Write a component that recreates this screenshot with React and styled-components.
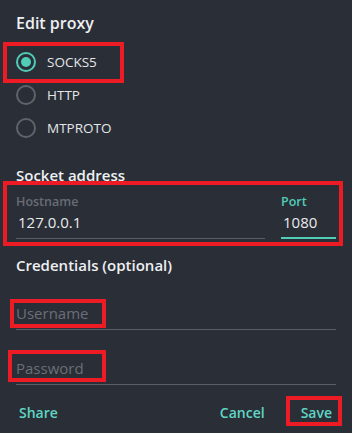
import styled, { createGlobalStyle } from "styled-components";

const GlobalStyle = createGlobalStyle`
  html, body {
    margin: 0;
    padding: 0;
    background: #2a2e37;
  }
  *, *::before, *::after {
    box-sizing: border-box;
  }
`;

const accent = "#4fcdb6";

const Dialog = styled.div`
  width: 352px;
  height: 433px;
  padding: 13px 16px 0;
  background: #2a2e37;
  font-family: "Open Sans", "Noto Sans", sans-serif;
  font-size: 15px;
  line-height: 20px;
  color: #e9eaec;
  display: flex;
  flex-direction: column;
`;

const Title = styled.h2`
  margin: 0;
  font-size: 16px;
  line-height: 20px;
  font-weight: 600;
  color: #eef0f2;
`;

const SectionTitle = styled.h3`
  margin: ${({ $top }) => $top}px 0 0;
  font-size: 15px;
  line-height: 20px;
  font-weight: 600;
  color: #eef0f2;
`;

// red annotation frame drawn over a part of the form
const Marked = styled.div`
  position: relative;
  display: flex;
  flex-direction: column;

  &::after {
    content: "";
    position: absolute;
    top: ${({ $box }) => $box[0]}px;
    left: ${({ $box }) => $box[1]}px;
    width: ${({ $box }) => $box[2]}px;
    height: ${({ $box }) => $box[3]}px;
    border: 4px solid #ed1c24;
    pointer-events: none;
  }
`;

const RadioList = styled.div`
  margin-top: 12px;
  display: flex;
  flex-direction: column;
`;

const RadioRow = styled.label`
  height: 33px;
  display: flex;
  align-items: center;
  gap: 11px;
  font-size: 13.5px;
  color: #e4e6e9;
  cursor: pointer;
`;

const RadioDot = styled.span`
  width: 20px;
  height: 20px;
  border-radius: 50%;
  border: 2px solid ${({ $on }) => ($on ? accent : "#5f636b")};
  display: flex;
  align-items: center;
  justify-content: center;

  &::before {
    content: "";
    width: 10px;
    height: 10px;
    border-radius: 50%;
    background: ${({ $on }) => ($on ? accent : "transparent")};
  }
`;

const FieldRow = styled.div`
  margin-top: 9px;
  display: flex;
  gap: 16px;
`;

const Field = styled.div`
  flex: ${({ $width }) => ($width ? `0 0 ${$width}px` : "1")};
  display: flex;
  flex-direction: column;
  border-bottom: ${({ $active }) =>
    $active ? `2px solid ${accent}` : "1px solid #5a5e66"};
  padding-bottom: ${({ $active }) => ($active ? 5 : 6)}px;
`;

const FieldLabel = styled.span`
  display: block;
  font-size: 12.5px;
  line-height: 16px;
  font-weight: 600;
  color: ${({ $active }) => ($active ? accent : "#686c74")};
  margin-bottom: 2px;
`;

const FieldValue = styled.span`
  display: block;
  font-size: 15px;
  line-height: 20px;
  color: ${({ $placeholder }) => ($placeholder ? "#6a6e76" : "#e9eaec")};
  padding-left: ${({ $indent }) => $indent || 0}px;
`;

const CredField = styled.div`
  margin-top: 28px;
  border-bottom: 1px solid #5a5e66;
  padding-bottom: 6px;
`;

const Footer = styled.div`
  margin-top: 18px;
  display: flex;
  align-items: center;
  justify-content: space-between;
`;

const ButtonGroup = styled.div`
  display: flex;
  align-items: center;
  gap: 36px;
  padding-right: 4px;
`;

const TextButton = styled.button`
  display: block;
  background: none;
  border: none;
  padding: 0 0 0 ${({ $pad }) => $pad || 0}px;
  font-family: inherit;
  font-size: 14px;
  line-height: 20px;
  font-weight: 600;
  color: #5fd6c4;
  cursor: pointer;
`;

const proxyTypes = ["SOCKS5", "HTTP", "MTPROTO"];

export default function App() {
  return (
    <>
      <GlobalStyle />
      <Dialog>
        <Title>Edit proxy</Title>

        <RadioList>
          {proxyTypes.map((t, i) =>
            i === 0 ? (
              <Marked key={t} $box={[-3, -13, 121, 41]}>
                <RadioRow>
                  <RadioDot $on />
                  {t}
                </RadioRow>
              </Marked>
            ) : (
              <RadioRow key={t}>
                <RadioDot />
                {t}
              </RadioRow>
            )
          )}
        </RadioList>

        <SectionTitle $top={21}>Socket address</SectionTitle>
        <Marked $box={[-4, -13, 340, 65]}>
          <FieldRow>
            <Field>
              <FieldLabel>Hostname</FieldLabel>
              <FieldValue $indent={2}>127.0.0.1</FieldValue>
            </Field>
            <Field $width={55} $active>
              <FieldLabel $active>Port</FieldLabel>
              <FieldValue $indent={2}>1080</FieldValue>
            </Field>
          </FieldRow>
        </Marked>

        <SectionTitle $top={16}>Credentials (optional)</SectionTitle>
        <CredField>
          <Marked $box={[-4, -6, 96, 29]}>
            <FieldValue $placeholder>Username</FieldValue>
          </Marked>
        </CredField>
        <CredField>
          <Marked $box={[-8, -8, 98, 32]}>
            <FieldValue $placeholder>Password</FieldValue>
          </Marked>
        </CredField>

        <Footer>
          <TextButton $pad={3}>Share</TextButton>
          <ButtonGroup>
            <TextButton>Cancel</TextButton>
            <Marked $box={[-7, -15, 56, 30]}>
              <TextButton>Save</TextButton>
            </Marked>
          </ButtonGroup>
        </Footer>
      </Dialog>
    </>
  );
}
